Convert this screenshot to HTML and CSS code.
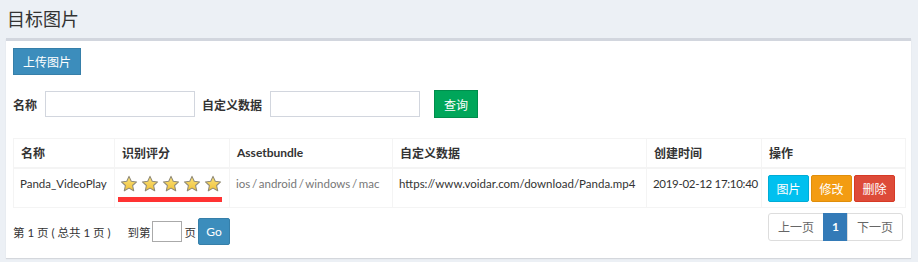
FILE: index.html
```html
<!DOCTYPE html>
<html>
<head>
<meta charset="utf-8">
<link rel="stylesheet" href="styles.css">
</head>
<body>
<h1 class="page-title">目标图片</h1>
<div class="box">
  <div class="toolbar">
    <button class="btn btn-primary btn-upload">上传图片</button>
  </div>
  <div class="search">
    <label class="search-label">名称</label>
    <input class="search-input" type="text">
    <label class="search-label">自定义数据</label>
    <input class="search-input" type="text">
    <button class="btn btn-success btn-query">查询</button>
  </div>
  <table class="grid">
    <colgroup>
      <col class="c1"><col class="c2"><col class="c3"><col class="c4"><col class="c5"><col class="c6">
    </colgroup>
    <thead>
      <tr><th>名称</th><th>识别评分</th><th>Assetbundle</th><th>自定义数据</th><th>创建时间</th><th>操作</th></tr>
    </thead>
    <tbody>
      <tr>
        <td>Panda_VideoPlay</td>
        <td class="rating-cell">
          <div class="stars">
            <svg class="star" viewBox="0 0 24 24"><defs><linearGradient id="g" x1="0" y1="0" x2="0" y2="1"><stop offset="0" stop-color="#fbe27a"/><stop offset="1" stop-color="#f0c23a"/></linearGradient></defs><path d="M12 1.8l3 6.6 7.1.8-5.3 4.8 1.5 7.1L12 17.5l-6.3 3.6 1.5-7.1-5.3-4.8 7.1-.8z" fill="url(#g)" stroke="#8f8a78" stroke-width="1.4" stroke-linejoin="round"/></svg>
            <svg class="star" viewBox="0 0 24 24"><path d="M12 1.8l3 6.6 7.1.8-5.3 4.8 1.5 7.1L12 17.5l-6.3 3.6 1.5-7.1-5.3-4.8 7.1-.8z" fill="url(#g)" stroke="#8f8a78" stroke-width="1.4" stroke-linejoin="round"/></svg>
            <svg class="star" viewBox="0 0 24 24"><path d="M12 1.8l3 6.6 7.1.8-5.3 4.8 1.5 7.1L12 17.5l-6.3 3.6 1.5-7.1-5.3-4.8 7.1-.8z" fill="url(#g)" stroke="#8f8a78" stroke-width="1.4" stroke-linejoin="round"/></svg>
            <svg class="star" viewBox="0 0 24 24"><path d="M12 1.8l3 6.6 7.1.8-5.3 4.8 1.5 7.1L12 17.5l-6.3 3.6 1.5-7.1-5.3-4.8 7.1-.8z" fill="url(#g)" stroke="#8f8a78" stroke-width="1.4" stroke-linejoin="round"/></svg>
            <svg class="star" viewBox="0 0 24 24"><path d="M12 1.8l3 6.6 7.1.8-5.3 4.8 1.5 7.1L12 17.5l-6.3 3.6 1.5-7.1-5.3-4.8 7.1-.8z" fill="url(#g)" stroke="#8f8a78" stroke-width="1.4" stroke-linejoin="round"/></svg>
          </div>
          <div class="underline"></div>
        </td>
        <td class="muted">ios / android / windows / mac</td>
        <td class="url">https://www.voidar.com/download/Panda.mp4</td>
        <td class="date">2019-02-12 17:10:40</td>
        <td class="ops">
          <button class="btn btn-sm btn-info">图片</button><button class="btn btn-sm btn-warning">修改</button><button class="btn btn-sm btn-danger">删除</button>
        </td>
      </tr>
    </tbody>
  </table>
  <div class="footer">
    <div class="pageinfo">
      <span class="summary">第 1 页 ( 总共 1 页 )</span>
      <span class="goto">到第</span>
      <input class="page-input" type="text">
      <span class="goto-page">页</span>
      <button class="btn btn-primary btn-go">Go</button>
    </div>
    <ul class="pager">
      <li class="pg">上一页</li>
      <li class="pg active">1</li>
      <li class="pg">下一页</li>
    </ul>
  </div>
</div>
</body>
</html>
```
FILE: styles.css
```css
* { box-sizing: border-box; }
body {
  margin: 0;
  background: #ecf0f5;
  font-family: "Lato", "Noto Sans CJK SC", sans-serif;
  font-size: 12px;
  color: #333;
  height: 262px;
  overflow: hidden;
}
.page-title {
  margin: 0;
  padding: 6px 0 0 7px;
  height: 38px;
  font-size: 18px;
  line-height: 24px;
  font-weight: normal;
  color: #333;
  font-family: "Noto Sans CJK SC", sans-serif;
}
.box {
  margin: 0 7px 0 6px;
  height: 220px;
  background: #fff;
  border-top: 3px solid #d2d6de;
  box-shadow: 0 1px 1px rgba(0,0,0,0.1);
  padding: 7px 6px 0 7px;
}
.btn {
  font-family: "Noto Sans CJK SC", sans-serif;
  font-size: 12px;
  color: #fff;
  border: 1px solid transparent;
  border-radius: 0;
  padding: 0;
  cursor: pointer;
}
.btn-primary { background: #3c8dbc; border-color: #367fa9; }
.btn-success { background: #00a65a; border-color: #008d4c; }
.btn-info { background: #00c0ef; border-color: #00acd6; }
.btn-warning { background: #f39c12; border-color: #e08e0b; }
.btn-danger { background: #dd4b39; border-color: #d73925; }
.btn-upload { width: 68px; height: 27px; display: block; }
.search {
  display: flex;
  align-items: center;
  margin-top: 15px;
  height: 28px;
}
.search-label {
  font-family: "Noto Sans CJK SC", sans-serif;
  font-weight: bold;
  color: #333;
  margin-right: 8px;
}
.search-input {
  width: 150px;
  height: 26px;
  border: 1px solid #d2d6de;
  margin: 0 7px 0 0;
  padding: 0;
}
.btn-query { width: 44px; height: 28px; margin-left: 7px; }
.grid {
  margin-top: 20px;
  width: 892px;
  border-collapse: collapse;
  border: 1px solid #f4f4f4;
  table-layout: fixed;
}
.c1 { width: 101px; } .c2 { width: 115px; } .c3 { width: 163px; }
.c4 { width: 254px; } .c5 { width: 115px; } .c6 { width: 144px; }
.grid th, .grid td {
  border: 1px solid #f4f4f4;
  text-align: left;
  vertical-align: top;
  white-space: nowrap;
  overflow: hidden;
}
.grid th {
  height: 29px;
  padding: 6px 6px 0 7px;
  font-weight: bold;
  border-bottom: 2px solid #f4f4f4;
  line-height: 16px;
  font-family: "Noto Sans CJK SC", sans-serif;
}
.grid th:nth-child(3) { font-family: "Lato", sans-serif; }
.grid td {
  height: 40px;
  padding: 7px 6px 0 6px;
  line-height: 16px;
  font-size: 11.5px;
  color: #333;
}
.grid td.muted { color: #777; word-spacing: -1.3px; }
.grid td.date { letter-spacing: -0.3px; }
.rating-cell { padding-left: 5px !important; }
.stars { display: flex; gap: 3px; height: 17px; align-items: center; }
.star { width: 18px; height: 18px; display: block; }
.underline { width: 104px; height: 5px; background: #ff3333; margin: 4px 0 0 -2px; }
.ops { padding-top: 6px !important; padding-left: 6px !important; }
.btn-sm { width: 41px; height: 27px; margin-right: 2px; border-radius: 2px; font-size: 12px; }
.footer {
  display: flex;
  justify-content: space-between;
  align-items: flex-start;
  margin-top: 5px;
}
.pageinfo {
  display: flex;
  align-items: center;
  margin-top: 5px;
  height: 27px;
  font-size: 11.5px;
  font-family: "Lato", "Noto Sans CJK SC", sans-serif;
}
.summary { margin-right: 17px; }
.page-input {
  width: 30px;
  height: 21px;
  border: 1px solid #aaa;
  margin: 0 3px 0 1px;
  padding: 0;
}
.btn-go { width: 32px; height: 27px; margin-left: 2px; border-radius: 2px; font-family: "Lato", sans-serif; font-size: 12px; }
.pager {
  display: flex;
  list-style: none;
  margin: 0 2px 0 0;
  padding: 0;
}
.pg {
  height: 28px;
  line-height: 26px;
  padding: 0 9px;
  border: 1px solid #ddd;
  color: #666;
  font-family: "Noto Sans CJK SC", sans-serif;
  background: #fff;
}
.pg + .pg { margin-left: -1px; }
.pg:first-child { border-radius: 3px 0 0 3px; }
.pg:last-child { border-radius: 0 3px 3px 0; }
.pg.active {
  background: #337ab7;
  border-color: #337ab7;
  color: #fff;
  font-weight: bold;
  width: 25px;
  padding: 0;
  text-align: center;
  font-family: "Lato", sans-serif;
}
```
